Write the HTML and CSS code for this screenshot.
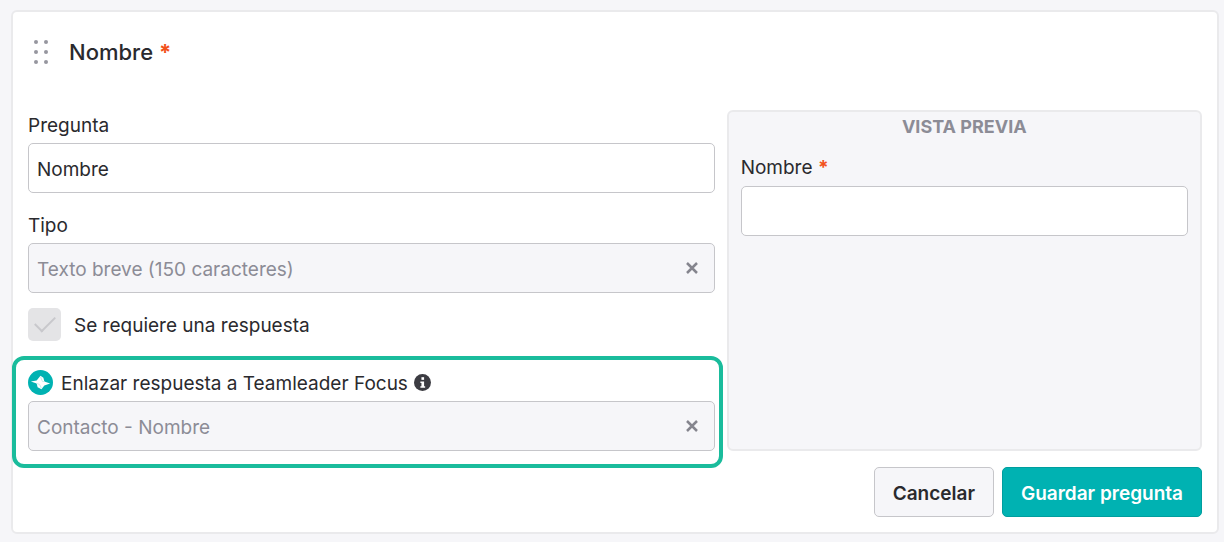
FILE: index.html
```
<!DOCTYPE html>
<html lang="es">
<head>
    <meta charset="UTF-8">
    <meta name="viewport" content="width=device-width, initial-scale=1.0">
    <title>Editar pregunta</title>
    <link rel="stylesheet" href="styles.css">
</head>
<body>
    <form class="question-card">
        <!-- Cabecera -->
        <div class="card-header">
            <svg class="drag-handle" viewBox="0 0 16 28" aria-hidden="true">
                <circle cx="3" cy="4" r="2"/>
                <circle cx="13" cy="4" r="2"/>
                <circle cx="3" cy="14" r="2"/>
                <circle cx="13" cy="14" r="2"/>
                <circle cx="3" cy="24" r="2"/>
                <circle cx="13" cy="24" r="2"/>
            </svg>
            <h1>Nombre <span class="required">*</span></h1>
        </div>

        <div class="card-body">
            <!-- Campos de la pregunta -->
            <div class="fields">
                <div class="form-group">
                    <label for="question">Pregunta</label>
                    <input type="text" class="control" id="question" value="Nombre">
                </div>

                <div class="form-group">
                    <label for="type">Tipo</label>
                    <div class="select-box">
                        <select class="control" id="type" disabled>
                            <option>Texto breve (150 caracteres)</option>
                        </select>
                        <button type="button" class="clear" aria-label="Borrar tipo" disabled>
                            <svg viewBox="0 0 12 12"><path d="M1 1l10 10M11 1l-10 10"/></svg>
                        </button>
                    </div>
                </div>

                <div class="check-row">
                    <input type="checkbox" id="required" checked disabled>
                    <label for="required">Se requiere una respuesta</label>
                </div>

                <div class="form-group highlighted">
                    <label for="link">
                        <svg class="focus-logo" viewBox="0 0 26 26" aria-hidden="true">
                            <circle cx="13" cy="13" r="13" fill="#00b2b2"/>
                            <path d="M3 12L9 11L13 6L16 8L17 12L23 14L17 16L14 20L10 18L9 14Z" fill="#fff"/>
                            <path d="M13 7L15 12L17 12M9 14L12 15L14 19" fill="none" stroke="#c4eaea" stroke-width="1"/>
                        </svg>
                        Enlazar respuesta a Teamleader Focus
                        <svg class="info-icon" viewBox="0 0 16 16" aria-hidden="true">
                            <circle cx="8" cy="8" r="8" fill="#3c3c42"/>
                            <rect x="7" y="3" width="2.5" height="2.5" fill="#fff"/>
                            <path d="M6 7H9.5V11.5H10.5V13H6V11.5H7V8.5H6Z" fill="#fff"/>
                        </svg>
                    </label>
                    <div class="select-box">
                        <select class="control" id="link" disabled>
                            <option>Contacto - Nombre</option>
                        </select>
                        <button type="button" class="clear" aria-label="Borrar enlace" disabled>
                            <svg viewBox="0 0 12 12"><path d="M1 1l10 10M11 1l-10 10"/></svg>
                        </button>
                    </div>
                </div>
            </div>

            <!-- Vista previa -->
            <section class="preview">
                <h2>VISTA PREVIA</h2>
                <label for="preview-name">Nombre <span class="required">*</span></label>
                <input type="text" class="control" id="preview-name">
            </section>
        </div>

        <div class="actions">
            <button type="button" class="btn">Cancelar</button>
            <button type="submit" class="btn btn-primary">Guardar pregunta</button>
        </div>
    </form>
</body>
</html>
```
FILE: styles.css
```
:root {
    --text: #2a2a2e;
    --muted: #8c8c96;
    --surface: #f6f6f9;
    --border: #c6c6ca;
    --border-light: #eaeaec;
    --primary: #00b2b2;
    --highlight: #1abc9c;
    --required: #f2511b;
}

* {
    box-sizing: border-box;
    margin: 0;
    padding: 0;
}

body {
    background: var(--surface);
    padding: 10px 5px 8px 11px;
    font-family: Inter, "Liberation Sans", sans-serif;
    font-size: 19px;
    line-height: 30px;
    color: var(--text);
}

.question-card {
    background: white;
    border: 2px solid var(--border-light);
    border-radius: 6px;
    padding: 14px 15px 15px;
}

.card-header {
    display: flex;
    align-items: center;
    gap: 20px;
    height: 52px;
    padding-left: 5px;
    margin-bottom: 32px;
}

.card-header h1 {
    font-size: 22px;
    font-weight: 500;
}

.drag-handle {
    width: 16px;
    height: 28px;
    fill: #96969f;
}

.required {
    color: var(--required);
    font-weight: 700;
}

.card-body {
    display: grid;
    grid-template-columns: 13fr 9fr;
    gap: 12px;
}

label {
    display: block;
}

.form-group label {
    display: flex;
    align-items: center;
    padding: 1px 0 2px;
}

.form-group + .form-group {
    margin-top: 17px;
}

.control {
    display: block;
    width: 100%;
    height: 50px;
    padding: 2px 8px 0;
    background: white;
    border: 1px solid var(--border);
    border-radius: 5px;
    font: inherit;
    color: inherit;
    appearance: none;
}

.control:disabled {
    background: var(--surface);
    color: var(--muted);
    opacity: 1;
}

select.control {
    padding-top: 3px;
}

.select-box {
    position: relative;
}

.clear {
    position: absolute;
    top: 0;
    right: 8px;
    width: 30px;
    height: 50px;
    border: none;
    background: none;
}

.clear svg {
    display: block;
    width: 12px;
    height: 12px;
    margin: 0 auto;
    fill: none;
    stroke: #85858e;
    stroke-width: 2.5;
}

.check-row {
    display: flex;
    align-items: center;
    gap: 13px;
    margin-top: 15px;
}

.check-row input {
    width: 33px;
    height: 33px;
    appearance: none;
    border-radius: 5px;
    background: #e4e4e6;
    display: grid;
    place-items: center;
}

.check-row input:checked::before {
    content: "";
    width: 18px;
    height: 9px;
    border: solid #c8c8cc;
    border-width: 0 0 2px 2px;
    transform: translateY(-3px) rotate(-45deg);
}

.check-row label {
    padding-top: 2px;
}

.highlighted {
    position: relative;
    margin-top: 27px;
}

.highlighted::before {
    content: "";
    position: absolute;
    inset: -12px -8px -17px -16px;
    border: 4px solid var(--highlight);
    border-radius: 12px;
    pointer-events: none;
}

.focus-logo {
    width: 25px;
    height: 25px;
    margin: 0 8px 3px 0;
}

.info-icon {
    width: 17px;
    height: 17px;
    margin: 0 0 3px 6px;
}

.preview {
    background: var(--surface);
    border: 2px solid var(--border-light);
    border-radius: 6px;
    padding: 0 12px;
}

.preview h2 {
    font-size: 18px;
    font-weight: 700;
    text-align: center;
    color: var(--muted);
}

.preview label {
    padding: 11px 0 3px;
}

.actions {
    display: flex;
    justify-content: flex-end;
    gap: 8px;
    margin-top: 16px;
}

.btn {
    height: 50px;
    padding: 3px 18px 0;
    background: var(--surface);
    border: 1px solid var(--border);
    border-radius: 5px;
    font: inherit;
    font-weight: 600;
    color: var(--text);
}

.btn-primary {
    background: var(--primary);
    border-color: #009e9e;
    color: white;
}
```
